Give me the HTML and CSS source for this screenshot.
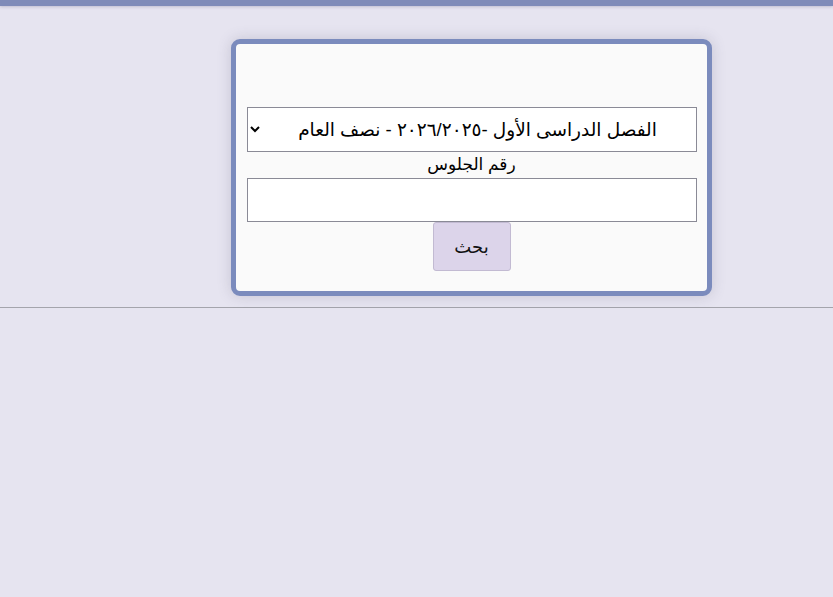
FILE: index.html
```html
<!DOCTYPE html>
<html lang="ar" dir="rtl">
<head>
<meta charset="utf-8">
<link rel="stylesheet" href="styles.css">
</head>
<body>
<div class="topbar"></div>
<main class="page">
  <form class="card">
    <div class="spacer"></div>
    <select class="term">
      <option>الفصل الدراسى الأول -٢٠٢٦/٢٠٢٥ - نصف العام</option>
    </select>
    <label class="lbl">رقم الجلوس</label>
    <input class="seat" type="text">
    <button class="btn" type="button">بحث</button>
  </form>
</main>
<hr class="rule">
</body>
</html>
```

FILE: styles.css
```css
html, body {
  margin: 0;
  padding: 0;
  background: #e6e4f0;
  font-family: "Liberation Sans", "DejaVu Sans", sans-serif;
}
.topbar {
  height: 6px;
  background: #7f8bb9;
  box-shadow: 0 1px 3px rgba(80, 80, 120, 0.25);
}
.page {
  display: flex;
  direction: ltr;
  padding: 33px 0 11px 231px;
}
.card {
  direction: rtl;
  width: 451px;
  border: 5px solid #7b8bbd;
  border-radius: 9px;
  background: #fafafa;
  box-shadow: 0 0 14px rgba(80, 80, 110, 0.22);
  padding: 0 10px 20px 10px;
  display: flex;
  flex-direction: column;
  align-items: center;
}
.spacer {
  height: 63px;
}
.term {
  width: 450px;
  height: 45px;
  border: 1px solid #8a8a96;
  border-radius: 0;
  background: #ffffff;
  font-family: "Liberation Sans", "DejaVu Sans", sans-serif;
  font-size: 18.5px;
  color: #000;
  text-align-last: center;
  padding: 0 6px;
}
.lbl {
  font-size: 17px;
  line-height: 26px;
  color: #000;
}
.seat {
  box-sizing: border-box;
  width: 450px;
  height: 44px;
  border: 1px solid #8a8a96;
  background: #fff;
  margin: 0;
}
.btn {
  width: 78px;
  height: 49px;
  margin-top: 0;
  background: #dcd4ea;
  border: 1px solid #c2bad2;
  border-radius: 3px;
  font-family: "Liberation Sans", "DejaVu Sans", sans-serif;
  font-size: 18px;
  color: #111;
}
.rule {
  margin: 0;
  border: 0;
  border-top: 1px solid #a4a4ac;
}
```
